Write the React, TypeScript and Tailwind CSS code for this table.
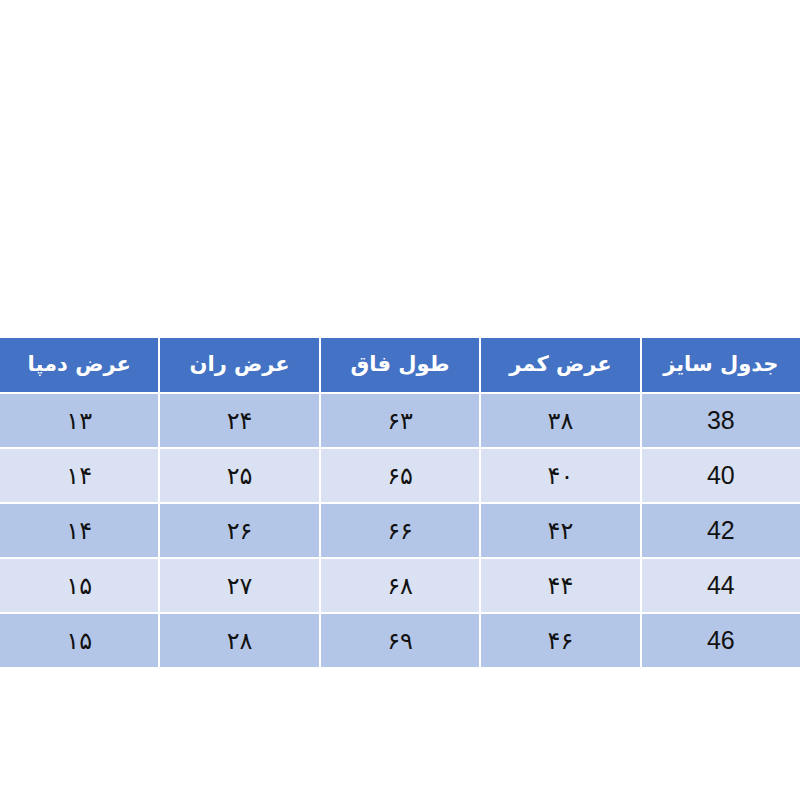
const headers = ["جدول سایز", "عرض کمر", "طول فاق", "عرض ران", "عرض دمپا"];

const rows = [
  ["38", "۳۸", "۶۳", "۲۴", "۱۳"],
  ["40", "۴۰", "۶۵", "۲۵", "۱۴"],
  ["42", "۴۲", "۶۶", "۲۶", "۱۴"],
  ["44", "۴۴", "۶۸", "۲۷", "۱۵"],
  ["46", "۴۶", "۶۹", "۲۸", "۱۵"],
];

export default function App() {
  return (
    <div className="w-[800px] h-[800px] bg-white pt-[338px]" dir="rtl">
      <div className="grid grid-cols-5 gap-[2px] bg-white">
        {headers.map((h) => (
          <div
            key={h}
            className="h-[54px] flex items-center justify-center bg-[#4472c4] text-white text-[21px] font-bold font-['DejaVu_Sans',sans-serif]"
          >
            {h}
          </div>
        ))}
        {rows.map((row, i) =>
          row.map((cell, j) => (
            <div
              key={`${i}-${j}`}
              className={`h-[53px] flex items-center justify-center text-[#111] ${
                i % 2 === 0 ? "bg-[#b4c6e7]" : "bg-[#d9e1f2]"
              } ${
                j === 0
                  ? "text-[25px] font-['Liberation_Sans',sans-serif]"
                  : "text-[24px] font-['DejaVu_Sans',sans-serif]"
              }`}
            >
              {cell}
            </div>
          ))
        )}
      </div>
    </div>
  );
}
